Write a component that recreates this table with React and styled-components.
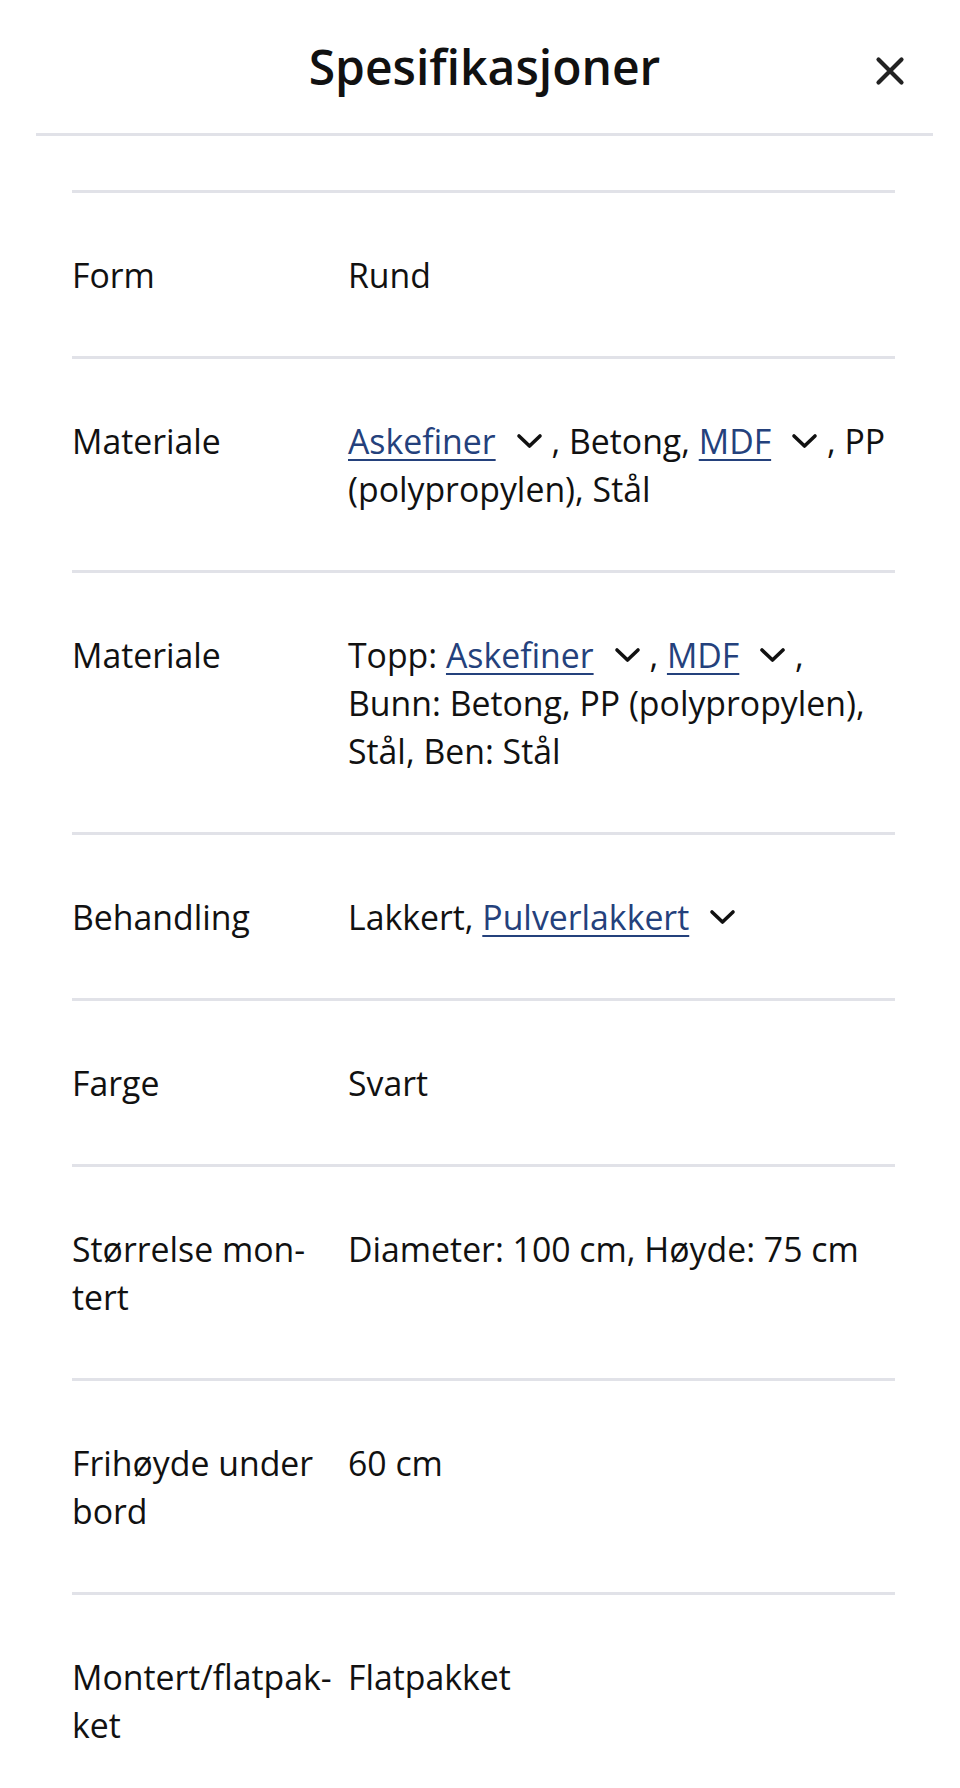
import React from 'react';
import styled, { createGlobalStyle } from 'styled-components';

const GlobalStyle = createGlobalStyle`
  html, body {
    margin: 0;
    padding: 0;
    background: #fff;
  }
  body {
    font-family: "Open Sans", "Noto Sans", "Liberation Sans", sans-serif;
    color: #111;
  }
`;

const Panel = styled.div`
  width: 897px;
  margin-left: 36px;
  background: #fff;
`;

const Header = styled.header`
  position: relative;
  height: 133px;
  display: flex;
  align-items: center;
  justify-content: center;
  border-bottom: 3px solid #e1e2e8;
`;

const Title = styled.h2`
  margin: 0;
  font-size: 48px;
  font-weight: 600;
  line-height: 1;
  color: #111;
`;

const CloseButton = styled.button`
  position: absolute;
  right: 27px;
  top: 55px;
  width: 32px;
  height: 32px;
  padding: 0;
  border: 0;
  background: none;
  display: flex;
  align-items: center;
  justify-content: center;
  cursor: pointer;
  color: #222;
`;

const Table = styled.dl`
  margin: 54px 38px 0 36px;
  border-top: 3px solid #e1e2e8;
`;

const Row = styled.div`
  display: grid;
  grid-template-columns: 276px 1fr;
  padding: 57.5px 0;
  border-bottom: 3px solid #e1e2e8;
  font-size: 33.8px;
  line-height: 48px;
`;

const Label = styled.dt`
  margin: 0;
  padding-right: 10px;
`;

const Value = styled.dd`
  margin: 0;
`;

const TermLink = styled.a`
  color: #24417c;
  text-decoration: underline;
  text-decoration-thickness: 2px;
  text-underline-offset: 5px;
`;

const ToggleButton = styled.button`
  display: inline-flex;
  align-items: center;
  justify-content: center;
  vertical-align: middle;
  margin: -6px 0 0 20px;
  padding: 0;
  border: 0;
  background: none;
  color: #111;
  width: 27px;
  height: 20px;
  cursor: pointer;
`;

const Chevron = () => (
  <ToggleButton aria-label="Vis mer">
    <svg width="27" height="16" viewBox="0 0 27 16" fill="none">
      <polyline points="3,3 13.5,13 24,3" stroke="currentColor" strokeWidth="3.6" strokeLinecap="round" strokeLinejoin="round" />
    </svg>
  </ToggleButton>
);

const Term = ({ children }) => (
  <>
    <TermLink href="#">{children}</TermLink>
    <Chevron />
  </>
);

const rows = [
  { label: 'Form', value: 'Rund' },
  {
    label: 'Materiale',
    value: (
      <>
        <Term>Askefiner</Term> , Betong, <Term>MDF</Term> , PP (polypropylen), Stål
      </>
    ),
  },
  {
    label: 'Materiale',
    value: (
      <>
        Topp: <Term>Askefiner</Term> , <Term>MDF</Term> , Bunn: Betong, PP (polypropylen), Stål, Ben: Stål
      </>
    ),
  },
  {
    label: 'Behandling',
    value: (
      <>
        Lakkert, <Term>Pulverlakkert</Term>
      </>
    ),
  },
  { label: 'Farge', value: 'Svart' },
  { label: 'Størrelse mon\u00ADtert', value: 'Diameter: 100 cm, Høyde: 75 cm' },
  { label: 'Frihøyde under bord', value: '60 cm' },
  { label: 'Montert/flatpak\u00ADket', value: 'Flatpakket' },
];

export default function App() {
  return (
    <>
      <GlobalStyle />
      <Panel>
        <Header>
          <Title>Spesifikasjoner</Title>
          <CloseButton aria-label="Lukk">
            <svg width="30" height="30" viewBox="0 0 30 30" fill="none">
              <path d="M3.5 3.5L26.5 26.5M26.5 3.5L3.5 26.5" stroke="currentColor" strokeWidth="4.2" strokeLinecap="round" />
            </svg>
          </CloseButton>
        </Header>
        <Table>
          {rows.map((r, i) => (
            <Row key={i}>
              <Label>{r.label}</Label>
              <Value>{r.value}</Value>
            </Row>
          ))}
        </Table>
      </Panel>
    </>
  );
}
